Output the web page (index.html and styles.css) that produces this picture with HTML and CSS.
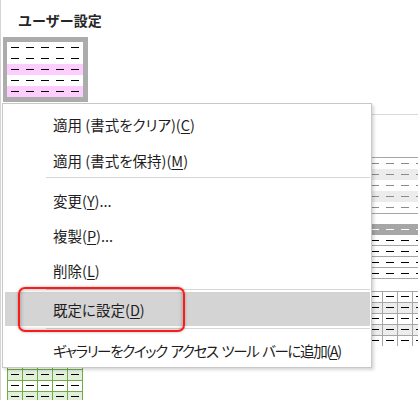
FILE: index.html
```html
<!DOCTYPE html>
<html lang="ja">
<head>
<meta charset="utf-8">
<title>ユーザー設定</title>
<link rel="stylesheet" href="styles.css">
</head>
<body>
<div class="page">
  <div class="gallery">
    <div class="sec-title">ユーザー設定</div>
    <div class="thumb selected">
      <div class="mini custom"><div class="r"></div><div class="r"></div><div class="r"></div><div class="r"></div><div class="r"></div></div>
    </div>
    <div class="sec-head"><span>淡色</span></div>
    <div class="grid">
      <div class="thumb"><div class="mini light"><div class="r"></div><div class="r"></div><div class="r"></div><div class="r"></div><div class="r"></div></div></div>
      <div class="thumb"><div class="mini light"><div class="r"></div><div class="r"></div><div class="r"></div><div class="r"></div><div class="r"></div></div></div>
      <div class="thumb"><div class="mini light"><div class="r"></div><div class="r"></div><div class="r"></div><div class="r"></div><div class="r"></div></div></div>
      <div class="thumb"><div class="mini light"><div class="r"></div><div class="r"></div><div class="r"></div><div class="r"></div><div class="r"></div></div></div>
      <div class="thumb"><div class="mini light"><div class="r"></div><div class="r"></div><div class="r"></div><div class="r"></div><div class="r"></div></div></div>

      <div class="thumb"><div class="mini header"><div class="r"></div><div class="r"></div><div class="r"></div><div class="r"></div><div class="r"></div></div></div>
      <div class="thumb"><div class="mini header"><div class="r"></div><div class="r"></div><div class="r"></div><div class="r"></div><div class="r"></div></div></div>
      <div class="thumb"><div class="mini header"><div class="r"></div><div class="r"></div><div class="r"></div><div class="r"></div><div class="r"></div></div></div>
      <div class="thumb"><div class="mini header"><div class="r"></div><div class="r"></div><div class="r"></div><div class="r"></div><div class="r"></div></div></div>
      <div class="thumb"><div class="mini header"><div class="r"></div><div class="r"></div><div class="r"></div><div class="r"></div><div class="r"></div></div></div>

      <div class="thumb"><div class="mini boxed"><div class="r"></div><div class="r"></div><div class="r"></div><div class="r"></div><div class="r"></div></div></div>
      <div class="thumb"><div class="mini boxed"><div class="r"></div><div class="r"></div><div class="r"></div><div class="r"></div><div class="r"></div></div></div>
      <div class="thumb"><div class="mini boxed"><div class="r"></div><div class="r"></div><div class="r"></div><div class="r"></div><div class="r"></div></div></div>
      <div class="thumb"><div class="mini boxed"><div class="r"></div><div class="r"></div><div class="r"></div><div class="r"></div><div class="r"></div></div></div>
      <div class="thumb"><div class="mini boxed"><div class="r"></div><div class="r"></div><div class="r"></div><div class="r"></div><div class="r"></div></div></div>

      <div class="thumb"><div class="mini boxed green"><div class="r"></div><div class="r"></div><div class="r"></div><div class="r"></div><div class="r"></div></div></div>
    </div>
  </div>

  <div class="menu" role="menu">
    <div class="item first" role="menuitem">適用 (書式をクリア)(<u>C</u>)</div>
    <div class="item short gap3" role="menuitem">適用 (書式を保持)(<u>M</u>)</div>
    <div class="sep"></div>
    <div class="item gap5" role="menuitem">変更(<u>Y</u>)...</div>
    <div class="item gap1" role="menuitem">複製(<u>P</u>)...</div>
    <div class="item gap1" role="menuitem">削除(<u>L</u>)</div>
    <div class="sep gap2"></div>
    <div class="item hot gap2" role="menuitem">既定に設定(<u>D</u>)</div>
    <div class="sep gap2"></div>
    <div class="item narrow gap4" role="menuitem">ギャラリーをクイック アクセス ツール バーに追加(<u>A</u>)</div>
  </div>

  <div class="callout"></div>
</div>
</body>
</html>
```

FILE: styles.css
```css
* { box-sizing: border-box; }

html, body {
  margin: 0;
  padding: 0;
  background: #fff;
}

.page {
  position: relative;
  width: 418px;
  height: 400px;
  overflow: hidden;
  border-left: 1px solid #d4d4d4;
  font-family: "Noto Sans CJK JP", "Noto Sans", sans-serif;
  color: #1f1f1f;
}

.gallery {
  padding: 10px 0 0 2px;
}

.sec-title {
  padding-left: 15px;
  height: 20px;
  line-height: 20px;
  font-size: 14px;
  font-weight: bold;
  color: #262626;
  margin-bottom: 7px;
}

.thumb {
  width: 85px;
  height: 65px;
  padding: 5px 5px 5px 4px;
  overflow: hidden;
}

.thumb.selected {
  background: #acacac;
}

.sec-head {
  display: flex;
  align-items: center;
  gap: 6px;
  height: 20px;
  margin-top: 2px;
  padding-left: 15px;
  font-size: 14px;
  font-weight: bold;
}

.sec-head::after {
  content: "";
  flex: 1;
  height: 1px;
  background: #d9d9d9;
}

.grid {
  display: grid;
  grid-template-columns: repeat(5, 85px);
  column-gap: 5px;
  row-gap: 2px;
  margin-top: 28px;
}

/* mini table previews */
.mini {
  width: 76px;
  height: 55px;
  display: flex;
  flex-direction: column;
  background: #fff;
  --dash: #000;
  --line: #a6a6a6;
}

.mini .r {
  height: 11px;
  flex: none;
  background-image: linear-gradient(to right, transparent 4px, var(--dash) 4px, var(--dash) 12px, transparent 12px);
  background-size: 15px 1px;
  background-repeat: repeat-x;
  background-position: 0 5px;
}

.mini.custom .r:nth-child(3),
.mini.custom .r:nth-child(5) {
  background-color: #fdcdfd;
}

.mini.light {
  --dash: #8a8a8a;
  border-top: 1px solid var(--line);
  border-bottom: 1px solid var(--line);
  height: 57px;
}

.mini.light .r:nth-child(even) {
  background-color: #ececec;
}

.mini.header .r:first-child {
  --dash: #fff;
  background-color: #a6a6a6;
}

.mini.header .r:not(:first-child) {
  border-bottom: 1px solid var(--line);
  background-position: 0 5px;
}

.mini.boxed .r {
  border-top: 1px solid var(--line);
  background-image:
    linear-gradient(to right, var(--line) 1px, transparent 1px),
    linear-gradient(to right, transparent 4px, var(--dash) 4px, var(--dash) 12px, transparent 12px);
  background-size: 15px 100%, 15px 1px;
  background-repeat: repeat-x, repeat-x;
  background-position: 0 0, 0 4px;
}

.mini.boxed .r:nth-child(even) {
  background-color: #ededed;
}

.mini.green {
  --line: #70ad47;
}

.mini.green .r:nth-child(even) {
  background-color: #e2efda;
}

/* context menu (overlay) */
.menu {
  position: absolute;
  left: 1px;
  top: 103px;
  width: 370px;
  height: 265px;
  padding-top: 3px;
  background: #fff;
  border: 1px solid #c8c8c8;
  box-shadow: 2px 2px 3px rgba(0, 0, 0, 0.16);
  display: flex;
  flex-direction: column;
  font-size: 14.5px;
  font-feature-settings: "palt";
  color: #1e1e1e;
}

.item {
  height: 34px;
  flex: none;
  display: flex;
  align-items: center;
  margin: 0 1px 0 2px;
  padding-left: 48px;
  white-space: pre;
}

.item u {
  text-decoration-thickness: 1px;
  text-underline-offset: 2px;
}

.item.short { height: 33px; }
.item.hot { background: #d4d4d4; }
.item.narrow { letter-spacing: -1.4px; word-spacing: 2px; }

.gap1 { margin-top: 1px; }
.gap2 { margin-top: 2px; }
.gap3 { margin-top: 3px; }
.gap4 { margin-top: 4px; }
.gap5 { margin-top: 5px; }

.sep {
  height: 1px;
  flex: none;
  background: #d7d7d7;
  margin-left: 43px;
  margin-right: 1px;
}

/* red annotation frame */
.callout {
  position: absolute;
  left: 17px;
  top: 287px;
  width: 167px;
  height: 45px;
  border: 2px solid #ff1a1a;
  border-radius: 7px;
  box-shadow: inset 0 0 4px rgba(0, 0, 0, 0.35), 0 0 3px rgba(0, 0, 0, 0.3);
}
```
